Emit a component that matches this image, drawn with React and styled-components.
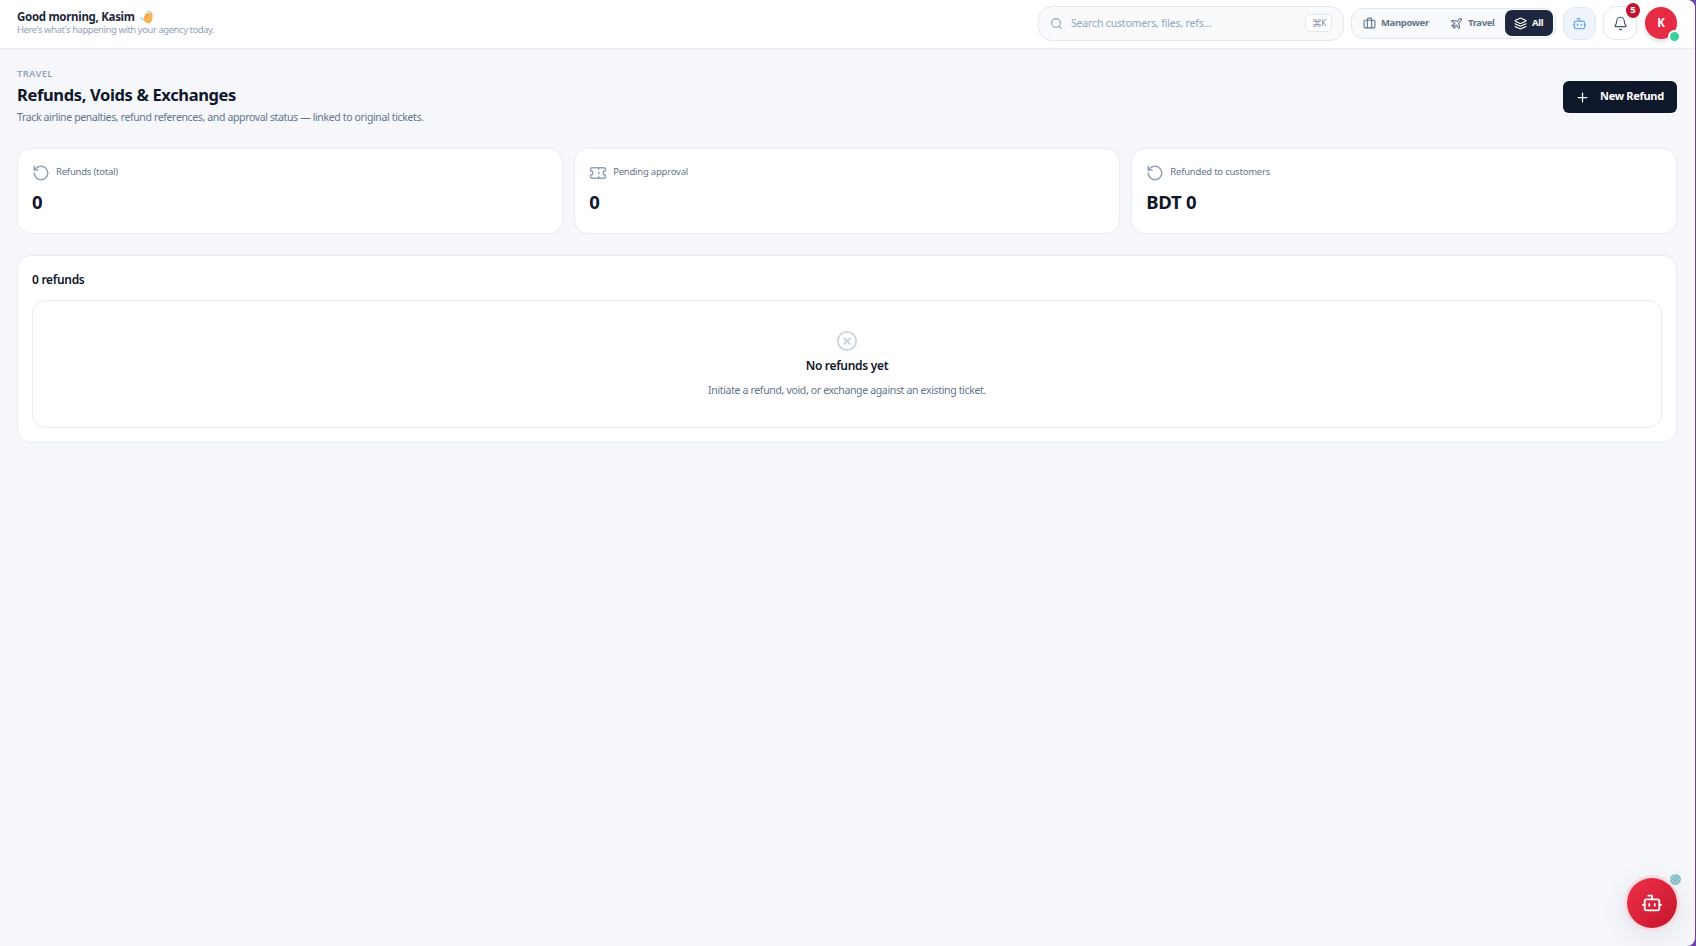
import styled, { createGlobalStyle } from 'styled-components'
import { Bell, Bot, Briefcase, CircleX, Layers, Plane, Plus, RotateCcw, Search, Ticket } from 'lucide-react'

const GlobalStyle = createGlobalStyle`
	* {
		box-sizing: border-box;
	}

	body {
		margin: 0;
		background-color: #6f42a8;
		font-family: 'Noto Sans', 'Open Sans', sans-serif;
		color: #0f172a;
	}

	svg {
		flex: none;
	}
`

const Window = styled.div`
	position: relative;
	width: 1695px;
	height: 946px;
	background-color: #f5f7fb;
	border-radius: 0 8px 8px 0;
	overflow: hidden;
`

const Header = styled.header`
	height: 49px;
	display: flex;
	align-items: flex-start;
	padding: 6px 18px 0 17px;
	background-color: #ffffff;
	border-bottom: 1px solid #e8ecf3;
`

const Greeting = styled.div`
	margin-right: auto;
	padding-top: 4px;
`

const GreetingLine = styled.div`
	display: flex;
	align-items: center;
	gap: 5px;
`

const Text = styled.div`
	font-size: ${({ size }) => size}px;
	line-height: ${({ line }) => line}px;
	font-weight: ${({ weight = 400 }) => weight};
	letter-spacing: ${({ spacing = 0 }) => spacing}px;
	color: ${({ color = '#0f172a' }) => color};
	white-space: nowrap;
`

const SearchBox = styled.div`
	width: 306px;
	height: 35px;
	display: flex;
	align-items: center;
	gap: 8px;
	padding: 0 11px 0 11px;
	margin-right: 7px;
	background-color: #f8fafc;
	border: 1px solid #e2e8f0;
	border-radius: 14px;

	> div {
		margin-top: -2px;
	}
`

const Shortcut = styled.kbd`
	width: 27px;
	height: 18px;
	display: flex;
	align-items: center;
	justify-content: center;
	margin: -1px 0 0 auto;
	background-color: #ffffff;
	border: 1px solid #e2e8f0;
	border-radius: 5px;
	color: #8495ab;
	font-family: 'DejaVu Sans', sans-serif;
	font-size: 10.5px;
	letter-spacing: -1px;

	> span {
		font-size: 8px;
	}
`

const Segments = styled.div`
	width: 205px;
	height: 31px;
	display: flex;
	align-items: center;
	padding: 0 1px 1px;
	margin: 2px 7px 0 0;
	background-color: #f8fafc;
	border: 1px solid #e2e8f0;
	border-radius: 12px;
`

const Segment = styled.div`
	width: ${({ width }) => width}px;
	height: 26px;
	display: flex;
	align-items: center;
	gap: 5px;
	padding-left: ${({ active }) => (active ? 9 : 10)}px;
	border-radius: 7px;
	color: ${({ active }) => (active ? '#ffffff' : '#64748b')};
	background-color: ${({ active }) => (active ? '#1e273d' : 'transparent')};
`

const IconButton = styled.div`
	position: relative;
	width: ${({ size }) => size}px;
	height: ${({ size }) => size}px;
	display: flex;
	align-items: center;
	justify-content: center;
	margin: ${({ size }) => (size === 33 ? '1px 7px 0 0' : '0 8px 0 0')};
	color: ${({ color }) => color};
	background-color: ${({ fill }) => fill};
	border: 1px solid #e2e8f0;
	border-radius: 12px;
`

const Badge = styled.span`
	position: absolute;
	top: -4px;
	right: -4px;
	width: 14px;
	height: 15px;
	border-radius: 50%;
	background-color: #c0172d;
	color: #ffffff;
	font-size: 9.5px;
	font-weight: 700;
	line-height: 14px;
	text-align: center;
`

const Avatar = styled.div`
	position: relative;
	width: 32px;
	height: 32px;
	margin-top: 1px;
	border-radius: 50%;
	background-color: #e62b45;
	box-shadow: 0 2px 5px rgba(15, 23, 42, 0.16);
	color: #ffffff;
	font-size: 11.5px;
	font-weight: 700;
	line-height: 31px;
	text-align: center;
`

const Online = styled.span`
	position: absolute;
	right: -4px;
	bottom: -4px;
	width: 13px;
	height: 13px;
	border: 2px solid #ffffff;
	border-radius: 50%;
	background-color: #3ad29a;
`

const Main = styled.main`
	padding: 18px 18px 0 17px;
`

const PageHead = styled.div`
	display: flex;
	align-items: flex-start;
	justify-content: space-between;
	height: 81px;
`

const NewButton = styled.button`
	width: 114px;
	height: 32px;
	display: flex;
	align-items: center;
	gap: 10px;
	margin-top: 14px;
	padding: 0 0 0 12px;
	border: 0;
	border-radius: 6px;
	background-color: #0f172a;
	color: #ffffff;
	font-family: inherit;

	> div {
		margin-top: -2px;
	}
`

const Stats = styled.div`
	display: grid;
	grid-template-columns: repeat(3, 1fr);
	gap: 11.5px;
	margin-bottom: 21px;
`

const Card = styled.section`
	height: ${({ height }) => height}px;
	padding: 0 14px;
	background-color: #ffffff;
	border: 1px solid #e8ecf4;
	border-radius: 14px;
`

const StatLabel = styled.div`
	display: flex;
	align-items: center;
	gap: 6px;
	height: 18px;
	margin: 15px 0 6px;
	color: #94a3b8;

	> div {
		margin-top: -2px;
	}
`

const PanelTitle = styled.div`
	padding: 14px 0 10px;
`

const Empty = styled.div`
	height: 128px;
	display: flex;
	flex-direction: column;
	align-items: center;
	padding-top: 29px;
	border: 1px solid #e8ecf4;
	border-radius: 14px;
	color: #cbd5e1;
`

const Fab = styled.div`
	position: absolute;
	left: 1627px;
	top: 878px;
	width: 50px;
	height: 50px;
	display: flex;
	align-items: center;
	justify-content: center;
	border-radius: 50%;
	color: #ffffff;
	background: linear-gradient(135deg, #f0304b, #c3152b);
	box-shadow: 0 0 0 3px #f9dce1, 0 8px 30px rgba(15, 23, 42, 0.1);
`

const FabDot = styled.span`
	position: absolute;
	right: -4px;
	top: -4px;
	width: 11px;
	height: 11px;
	border-radius: 50%;
	background: repeating-conic-gradient(#6fc4c4 0 25%, #b4c5d3 0 50%) 0 0 / 4px 4px;
`

const Wave = () => (
	<svg width='13' height='13' viewBox='0 0 13 13' fill='none'>
		<path d='M4.2 5.2 5.6 2.6 7.4 2l2.3.2 1.6-1 1.2 1.2v6l-1.6 2.8-2.3 1.2-3.2-.8-1.9-2.4Z' fill='#f9b45b' />
		<path d='m5 5.2 1.7 1.2M6.5 3.5l1.6 1.6' stroke='#dc7c37' strokeWidth='.8' />
		<path d='M7.3.8 9.8.6l1.2 1M.7 6.3l.8 1.6 2.2.7' stroke='#75b9d7' strokeWidth='1' />
	</svg>
)

const stats = [
	{ icon: RotateCcw, label: 'Refunds (total)', value: '0' },
	{ icon: Ticket, label: 'Pending approval', value: '0' },
	{ icon: RotateCcw, label: 'Refunded to customers', value: 'BDT 0' },
]

const segments = [
	{ icon: Briefcase, label: 'Manpower', width: 87 },
	{ icon: Plane, label: 'Travel', width: 65 },
	{ icon: Layers, label: 'All', width: 48, active: true },
]

const App = () => (
	<>
		<GlobalStyle />
		<Window>
			<Header>
				<Greeting>
					<GreetingLine>
						<Text size={11.5} line={14} weight={700} spacing={-0.3} color='#1e293b'>Good morning, Kasim</Text>
						<Wave />
					</GreetingLine>
					<Text size={9.5} line={12} spacing={-0.45} color='#94a3b8'>Here's what's happening with your agency today.</Text>
				</Greeting>
				<SearchBox>
					<Search size={13} color='#94a3b8' />
					<Text size={10.5} line={16} spacing={-0.17} color='#94a3b8'>Search customers, files, refs...</Text>
					<Shortcut>⌘<span>K</span></Shortcut>
				</SearchBox>
				<Segments>
					{segments.map(({ icon: Icon, label, width, active }) => (
						<Segment key={label} width={width} active={active}>
							<Icon size={13} />
							<Text size={9.5} line={14} weight={700} spacing={-0.35} color='inherit'>{label}</Text>
						</Segment>
					))}
				</Segments>
				<IconButton size={33} color='#6aade4' fill='#eff4fc'>
					<Bot size={15} />
				</IconButton>
				<IconButton size={34} color='#475569' fill='#ffffff'>
					<Bell size={15} strokeWidth={1.8} />
					<Badge>5</Badge>
				</IconButton>
				<Avatar>
					K
					<Online />
				</Avatar>
			</Header>
			<Main>
				<PageHead>
					<div>
						<Text size={9.5} line={14} weight={600} color='#94a3b8' spacing={0.3}>TRAVEL</Text>
						<Text size={16.5} line={28} weight={700} spacing={-0.36}>Refunds, Voids & Exchanges</Text>
						<Text size={10.5} line={16} spacing={-0.36} color='#64748b'>Track airline penalties, refund references, and approval status — linked to original tickets.</Text>
					</div>
					<NewButton>
						<Plus size={15} />
						<Text size={11} line={16} weight={700} spacing={-0.3} color='inherit'>New Refund</Text>
					</NewButton>
				</PageHead>
				<Stats>
					{stats.map(({ icon: Icon, label, value }) => (
						<Card key={label} height={86}>
							<StatLabel>
								<Icon size={18} />
								<Text size={9.5} line={16} spacing={-0.22} color='#64748b'>{label}</Text>
							</StatLabel>
							<Text size={18.5} line={28} weight={700} spacing={-0.3}>{value}</Text>
						</Card>
					))}
				</Stats>
				<Card height={188}>
					<PanelTitle>
						<Text size={12} line={20} weight={600} spacing={-0.3}>0 refunds</Text>
					</PanelTitle>
					<Empty>
						<CircleX size={22} />
						<Text size={12} line={28} weight={600} spacing={-0.3}>No refunds yet</Text>
						<Text size={10.5} line={20} spacing={-0.34} color='#64748b'>Initiate a refund, void, or exchange against an existing ticket.</Text>
					</Empty>
				</Card>
			</Main>
			<Fab>
				<Bot size={22} />
				<FabDot />
			</Fab>
		</Window>
	</>
)

export default App
